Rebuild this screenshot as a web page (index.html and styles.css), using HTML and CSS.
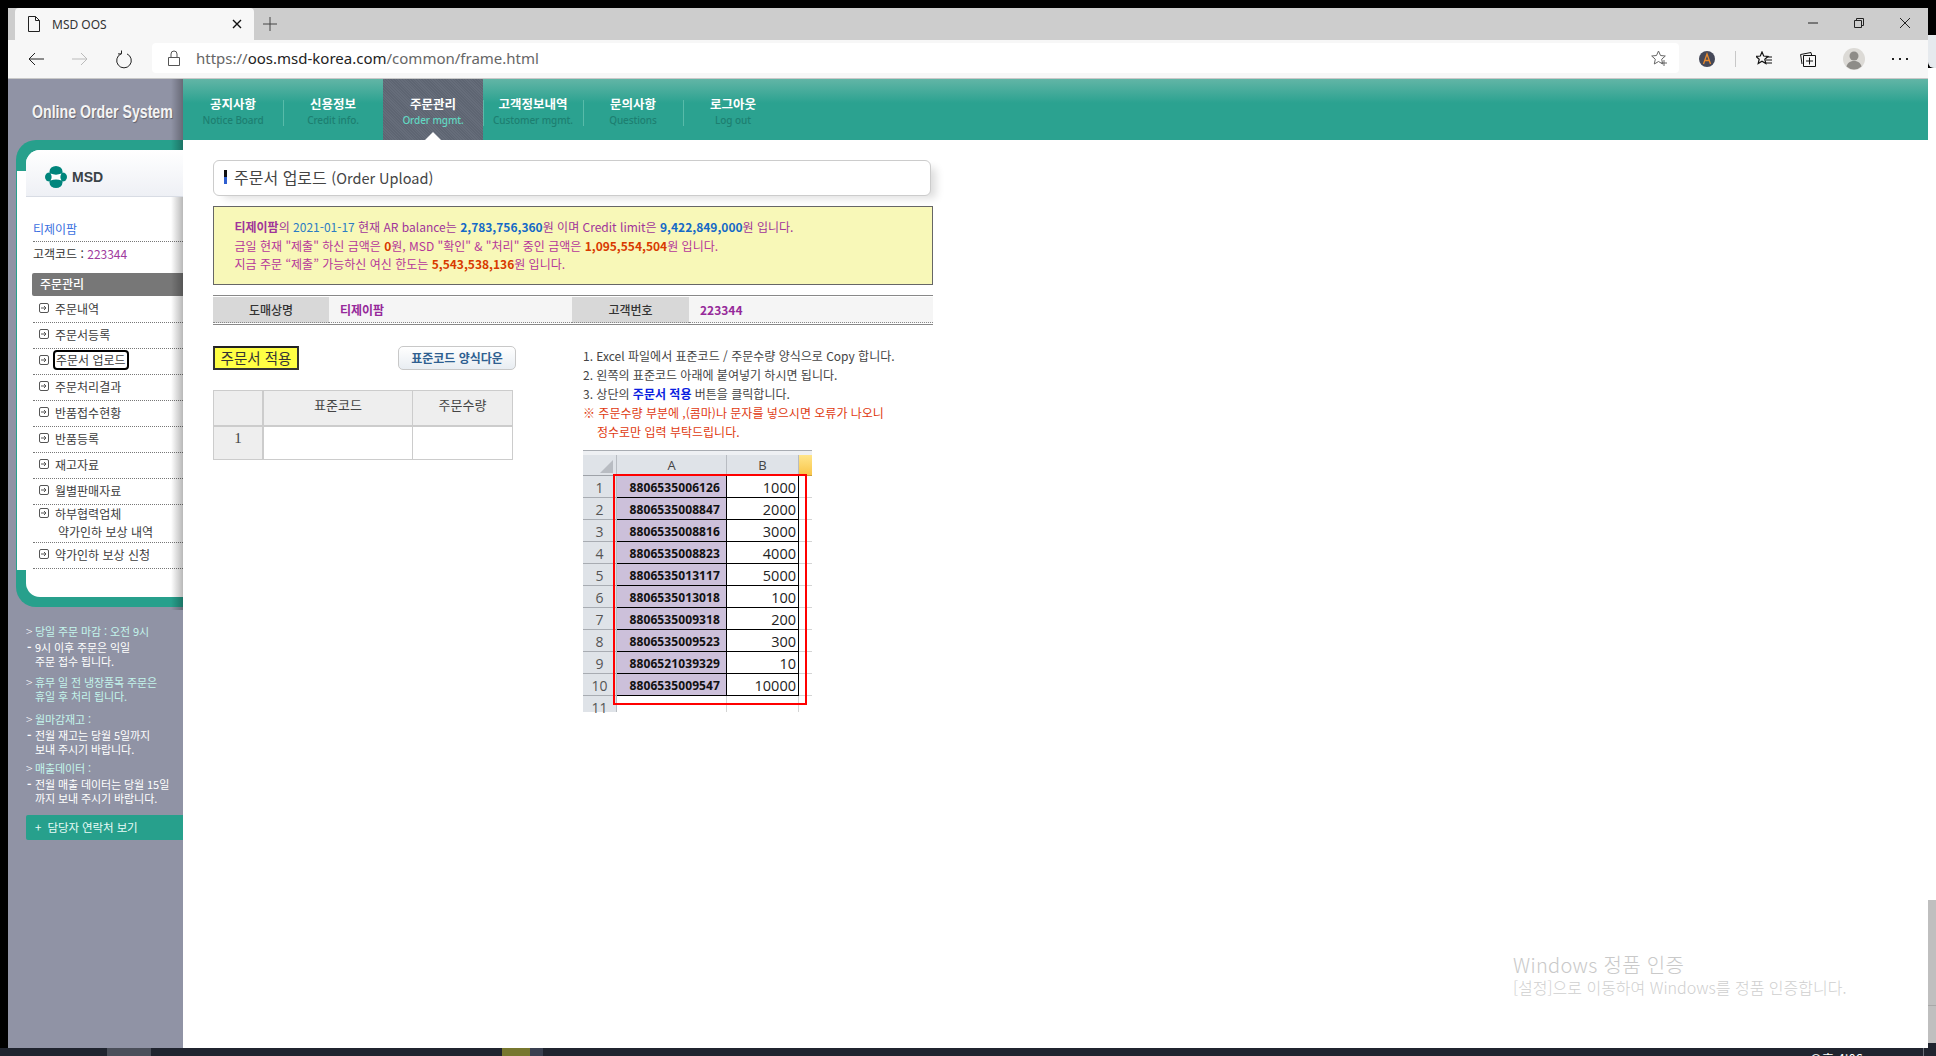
FILE: index.html
```html
<!DOCTYPE html>
<html lang="ko">
<head>
<meta charset="utf-8">
<title>MSD OOS</title>
<link rel="stylesheet" href="styles.css">
</head>
<body>
<div class="screen">
  <div class="desktop">
    <div class="browser">
      <div class="tabstrip">
        <div class="tab">
          <svg class="tab-fav" viewBox="0 0 14 16" width="14" height="16"><path d="M1.5.5h7l4 4v11h-11zM8.5.5v4h4" fill="none" stroke="#222" stroke-width="1"/></svg>
          <span class="tab-title">MSD OOS</span>
          <svg class="tab-close" viewBox="0 0 10 10" width="10" height="10"><path d="M1 1l8 8M9 1l-8 8" stroke="#111" stroke-width="1.4"/></svg>
        </div>
        <svg class="tab-new" viewBox="0 0 14 14" width="14" height="14"><path d="M7 0v14M0 7h14" stroke="#444" stroke-width="1"/></svg>
        <div class="winctl">
          <div class="winbtn"><svg viewBox="0 0 10 10" width="10" height="10"><path d="M0 5h10" stroke="#222" stroke-width="1"/></svg></div>
          <div class="winbtn"><svg viewBox="0 0 10 10" width="10" height="10"><path d="M.5 2.5h7v7h-7zM2.5 2.5v-2h7v7h-2" fill="none" stroke="#222" stroke-width="1"/></svg></div>
          <div class="winbtn"><svg viewBox="0 0 10 10" width="10" height="10"><path d="M0 0l10 10M10 0L0 10" stroke="#222" stroke-width="1"/></svg></div>
        </div>
      </div>
      <div class="toolbar">
        <div class="tbtn"><svg viewBox="0 0 16 14" width="16" height="14"><path d="M16 7H1M7 1L1 7l6 6" fill="none" stroke="#222" stroke-width="1"/></svg></div>
        <div class="tbtn"><svg viewBox="0 0 16 14" width="16" height="14"><path d="M0 7h15M9 1l6 6-6 6" fill="none" stroke="#bbb" stroke-width="1"/></svg></div>
        <div class="tbtn"><svg viewBox="0 0 16 19" width="16" height="19"><path d="M5 3.9A7.300 7.300 0 1 0 11 3.900M5.500 .5v3.400H2" fill="none" stroke="#222" stroke-width="1"/></svg></div>
        <div class="address">
          <svg class="lock" viewBox="0 0 12 16" width="12" height="16"><path d="M.5 7.5h11v8H.5zM3 7.5V4a3 3 0 0 1 6 0v3.500" fill="none" stroke="#555" stroke-width="1"/></svg>
          <span class="url"><span class="url-dim">https://</span>oos.msd-korea.com<span class="url-dim">/common/frame.html</span></span>
          <svg class="addfav" viewBox="0 0 16 16" width="16" height="16"><path d="M7.500 1l2 4.500 4.800.5-3.600 3.200 1 4.800-4.200-2.500-4.200 2.500 1-4.800L.7 6l4.800-.5z" fill="none" stroke="#666" stroke-width="1"/><path d="M13 10v6M10 13h6" stroke="#666" stroke-width="1"/></svg>
        </div>
        <div class="tbtn tbtn-first"><svg viewBox="0 0 16 16" width="16" height="16"><circle cx="8" cy="8" r="8" fill="#454858"/><path d="M4.500 13L8 3l3.500 10M6 9.500h4" fill="none" stroke="#e8892c" stroke-width="1.300"/></svg></div>
        <div class="tsep"></div>
        <div class="tbtn"><svg viewBox="0 0 16 16" width="16" height="16"><path d="M6 1l1.700 4 4.300.4-3.200 2.800 1 4.300L6 10.300 2.200 12.500l1-4.300L0 5.400 4.300 5z" fill="none" stroke="#111" stroke-width="1.200"/><path d="M10 6h6M10 9h6M10 12h6" stroke="#111" stroke-width="1"/></svg></div>
        <div class="tbtn"><svg viewBox="0 0 16 16" width="16" height="16"><path d="M2 13L.6 3.500 11 1.500l.6 2.500" fill="none" stroke="#111" stroke-width="1"/><path d="M3.500 4.500h12v11h-12zM9.500 6.500v7M6 10h7" fill="#f7f7f7" stroke="#111" stroke-width="1"/></svg></div>
        <div class="tbtn tbtn-gap"><svg viewBox="0 0 22 22" width="22" height="22"><circle cx="11" cy="11" r="11" fill="#dcdad6"/><circle cx="11" cy="8" r="4.500" fill="#8e8c88"/><path d="M3.500 18.500c1-4 4-5.500 7.500-5.500s6.500 1.500 7.500 5.500A11 11 0 0 1 3.500 18.500z" fill="#8e8c88"/></svg></div>
        <div class="tbtn tbtn-gap"><svg viewBox="0 0 16 4" width="16" height="4"><path d="M0 1h2v2H0zM7 1h2v2H7zM14 1h2v2h-2z" fill="#222"/></svg></div>
      </div>
      <div class="app">
        <aside class="sidebar">
          <div class="brand"><span class="brand-text">Online Order System</span></div>
          <div class="card">
            <div class="card-inner">
              <div class="logo">
                <svg viewBox="0 0 22 22" width="22" height="22"><ellipse cx="11" cy="5.500" rx="6.500" ry="5.500" fill="#00857c"/><ellipse cx="11" cy="16.500" rx="6.500" ry="5.500" fill="#00857c"/><circle cx="4.500" cy="11" r="4.500" fill="#00857c"/><circle cx="17.500" cy="11" r="4.500" fill="#00857c"/><path d="M5.500 7.500c3.500 1.500 7.500 1.500 11 0-1.500 2.500-1.500 4.500 0 7-3.500-1.500-7.500-1.500-11 0 1.500-2.500 1.500-4.500 0-7z" fill="#fff"/></svg>
                <span class="logo-text">MSD</span>
              </div>
              <div class="customer">
                <div class="cust-name">티제이팜</div>
                <div class="cust-code">고객코드 : <span class="purple">223344</span></div>
              </div>
              <div class="menu-title">주문관리</div>
              <ul class="menu">
                <li class="menu-item"><svg class="mi" viewBox="0 0 10 10" width="10" height="10"><rect x=".5" y=".5" width="9" height="9" rx="1.500" fill="none" stroke="#555"/><path d="M2 5h5M5 3l2 2-2 2" fill="none" stroke="#555"/></svg>주문내역</li>
                <li class="menu-item"><svg class="mi" viewBox="0 0 10 10" width="10" height="10"><rect x=".5" y=".5" width="9" height="9" rx="1.500" fill="none" stroke="#555"/><path d="M2 5h5M5 3l2 2-2 2" fill="none" stroke="#555"/></svg>주문서등록</li>
                <li class="menu-item"><svg class="mi" viewBox="0 0 10 10" width="10" height="10"><rect x=".5" y=".5" width="9" height="9" rx="1.500" fill="none" stroke="#555"/><path d="M2 5h5M5 3l2 2-2 2" fill="none" stroke="#555"/></svg><span class="focused">주문서 업로드</span></li>
                <li class="menu-item"><svg class="mi" viewBox="0 0 10 10" width="10" height="10"><rect x=".5" y=".5" width="9" height="9" rx="1.500" fill="none" stroke="#555"/><path d="M2 5h5M5 3l2 2-2 2" fill="none" stroke="#555"/></svg>주문처리결과</li>
                <li class="menu-item"><svg class="mi" viewBox="0 0 10 10" width="10" height="10"><rect x=".5" y=".5" width="9" height="9" rx="1.500" fill="none" stroke="#555"/><path d="M2 5h5M5 3l2 2-2 2" fill="none" stroke="#555"/></svg>반품접수현황</li>
                <li class="menu-item"><svg class="mi" viewBox="0 0 10 10" width="10" height="10"><rect x=".5" y=".5" width="9" height="9" rx="1.500" fill="none" stroke="#555"/><path d="M2 5h5M5 3l2 2-2 2" fill="none" stroke="#555"/></svg>반품등록</li>
                <li class="menu-item"><svg class="mi" viewBox="0 0 10 10" width="10" height="10"><rect x=".5" y=".5" width="9" height="9" rx="1.500" fill="none" stroke="#555"/><path d="M2 5h5M5 3l2 2-2 2" fill="none" stroke="#555"/></svg>재고자료</li>
                <li class="menu-item"><svg class="mi" viewBox="0 0 10 10" width="10" height="10"><rect x=".5" y=".5" width="9" height="9" rx="1.500" fill="none" stroke="#555"/><path d="M2 5h5M5 3l2 2-2 2" fill="none" stroke="#555"/></svg>월별판매자료</li>
                <li class="menu-item menu-item-double">
                  <div class="menu-line"><svg class="mi" viewBox="0 0 10 10" width="10" height="10"><rect x=".5" y=".5" width="9" height="9" rx="1.500" fill="none" stroke="#555"/><path d="M2 5h5M5 3l2 2-2 2" fill="none" stroke="#555"/></svg>하부협력업체</div>
                  <div class="menu-sub">약가인하 보상 내역</div>
                </li>
                <li class="menu-item"><svg class="mi" viewBox="0 0 10 10" width="10" height="10"><rect x=".5" y=".5" width="9" height="9" rx="1.500" fill="none" stroke="#555"/><path d="M2 5h5M5 3l2 2-2 2" fill="none" stroke="#555"/></svg>약가인하 보상 신청</li>
              </ul>
            </div>
          </div>
          <div class="notes">
            <div class="note-group">
              <div class="note-head"><span class="note-mark">&gt;</span>당일 주문 마감 : 오전 9시</div>
              <div class="note-body"><span class="note-mark note-dash">-</span>9시 이후 주문은 익일<br>주문 접수 됩니다.</div>
            </div>
            <div class="note-group note-group-wide">
              <div class="note-head"><span class="note-mark">&gt;</span>휴무 일 전 냉장품목 주문은<br>휴일 후 처리 됩니다.</div>
            </div>
            <div class="note-group note-group-tight">
              <div class="note-head"><span class="note-mark">&gt;</span>월마감재고 :</div>
              <div class="note-body"><span class="note-mark note-dash">-</span>전월 재고는 당월 5일까지<br>보내 주시기 바랍니다.</div>
            </div>
            <div class="note-group note-group-last">
              <div class="note-head"><span class="note-mark">&gt;</span>매출데이터 :</div>
              <div class="note-body"><span class="note-mark note-dash">-</span>전월 매출 데이터는 당월 15일<br>까지 보내 주시기 바랍니다.</div>
            </div>
            <div class="contact">+&nbsp;&nbsp;담당자 연락처 보기</div>
          </div>
        </aside>
        <div class="main">
          <nav class="nav">
            <div class="nav-item"><b>공지사항</b><small>Notice Board</small></div>
            <i class="nav-sep"></i>
            <div class="nav-item"><b>신용정보</b><small>Credit info.</small></div>
            <div class="nav-item nav-active"><b>주문관리</b><small>Order mgmt.</small></div>
            <i class="nav-sep"></i>
            <div class="nav-item"><b>고객정보내역</b><small>Customer mgmt.</small></div>
            <i class="nav-sep"></i>
            <div class="nav-item"><b>문의사항</b><small>Questions</small></div>
            <i class="nav-sep"></i>
            <div class="nav-item"><b>로그아웃</b><small>Log out</small></div>
          </nav>
          <div class="content">
            <div class="page-title"><i class="tick"></i>주문서 업로드&nbsp;<span class="title-en">(Order Upload)</span></div>
            <div class="notice">
              <div class="l-purple"><b>티제이팜</b>의 <span class="blue-t">2021-01-17</span> 현재 AR balance는 <b class="blue-n">2,783,756,360</b>원 이며 Credit limit은 <b class="blue-n">9,422,849,000</b>원 입니다.</div>
              <div class="l-magenta">금일 현재 "제출" 하신 금액은 <b class="red-n">0</b>원, MSD "확인" &amp; "처리" 중인 금액은 <b class="red-n">1,095,554,504</b>원 입니다.</div>
              <div class="l-magenta">지금 주문 “제출” 가능하신 여신 한도는 <b class="red-n">5,543,538,136</b>원 입니다.</div>
            </div>
            <div class="info">
              <div class="info-label">도매상명</div>
              <div class="info-value">티제이팜</div>
              <div class="info-label">고객번호</div>
              <div class="info-value">223344</div>
            </div>
            <div class="lower">
              <div class="lower-left">
                <div class="actions">
                  <div class="btn-apply">주문서 적용</div>
                  <div class="btn-dl">표준코드 양식다운</div>
                </div>
                <div class="sheet">
                  <div class="sh-head"></div>
                  <div class="sh-head">표준코드</div>
                  <div class="sh-head">주문수량</div>
                  <div class="sh-num">1</div>
                  <div class="sh-cell"></div>
                  <div class="sh-cell"></div>
                </div>
              </div>
              <div class="lower-right">
                <div class="steps">
                  <div>1. Excel 파일에서 표준코드 / 주문수량 양식으로 Copy 합니다.</div>
                  <div>2. 왼쪽의 표준코드 아래에 붙여넣기 하시면 됩니다.</div>
                  <div>3. 상단의 <b class="step-blue">주문서 적용</b> 버튼을 클릭합니다.</div>
                  <div class="step-red">※ 주문수량 부분에 ,(콤마)나 문자를 넣으시면 오류가 나오니</div>
                  <div class="step-red step-indent">정수로만 입력 부탁드립니다.</div>
                </div>
                <div class="excel">
                  <div class="xl-strip"></div>
                  <div class="xl-grid">
                    <div class="xl-corner"></div><div class="xl-col">A</div><div class="xl-col">B</div><div class="xl-col-c"></div>
                    <div class="xl-row">1</div><div class="xl-a">8806535006126</div><div class="xl-b">1000</div><div class="xl-c"></div>
                    <div class="xl-row">2</div><div class="xl-a">8806535008847</div><div class="xl-b">2000</div><div class="xl-c"></div>
                    <div class="xl-row">3</div><div class="xl-a">8806535008816</div><div class="xl-b">3000</div><div class="xl-c"></div>
                    <div class="xl-row">4</div><div class="xl-a">8806535008823</div><div class="xl-b">4000</div><div class="xl-c"></div>
                    <div class="xl-row">5</div><div class="xl-a">8806535013117</div><div class="xl-b">5000</div><div class="xl-c"></div>
                    <div class="xl-row">6</div><div class="xl-a">8806535013018</div><div class="xl-b">100</div><div class="xl-c"></div>
                    <div class="xl-row">7</div><div class="xl-a">8806535009318</div><div class="xl-b">200</div><div class="xl-c"></div>
                    <div class="xl-row">8</div><div class="xl-a">8806535009523</div><div class="xl-b">300</div><div class="xl-c"></div>
                    <div class="xl-row">9</div><div class="xl-a">8806521039329</div><div class="xl-b">10</div><div class="xl-c"></div>
                    <div class="xl-row">10</div><div class="xl-a">8806535009547</div><div class="xl-b">10000</div><div class="xl-c"></div>
                    <div class="xl-row xl-row-last">11</div><div class="xl-e"></div><div class="xl-e"></div><div class="xl-c xl-c-last"></div>
                  </div>
                  <div class="xl-mark"></div>
                </div>
              </div>
            </div>
            <div class="watermark">
              <div class="wm-title">Windows 정품 인증</div>
              <div class="wm-sub">[설정]으로 이동하여 Windows를 정품 인증합니다.</div>
            </div>
          </div>
        </div>
      </div>
    </div>
    <div class="edge">
      <div class="edge-top"></div>
      <div class="edge-light"></div>
      <div class="edge-white"></div>
      <div class="edge-grey"></div>
    </div>
  </div>
  <div class="taskbar">
    <i class="task-a"></i><i class="task-b"></i><i class="task-c"></i>
    <span class="clock">오후 4:06</span>
    <i class="task-d"></i>
  </div>
</div>
</body>
</html>
```

FILE: styles.css
```css
* { box-sizing: border-box; }
html, body { margin: 0; padding: 0; background: #000; }
body { font-family: "Noto Sans CJK KR", "Noto Sans", sans-serif; font-size: 12px; color: #333; overflow: hidden; }
ul { list-style: none; margin: 0; padding: 0; }
i { font-style: normal; display: block; }
svg { display: block; flex: none; }

.screen { width: 1936px; height: 1056px; display: flex; flex-direction: column; padding-top: 8px; overflow: hidden; }
.desktop { flex: 1; display: flex; padding-left: 8px; min-height: 0; }
.browser { width: 1920px; display: flex; flex-direction: column; }

.edge { flex: 1; display: flex; flex-direction: column; margin-top: -8px; }
.edge-top { height: 35px; background: #000; }
.edge-light { height: 33px; background: #e6eaee; border-bottom-left-radius: 6px; }
.edge-white { height: 832px; background: #fff; }
.edge-grey { flex: 1; background: linear-gradient(180deg, #bfbfbf 105px, #a8a8a8 105px, #a8a8a8 106px, #bfbfbf 106px, #bfbfbf 143px, #20242f 143px); }

.tabstrip { height: 32px; background: #cdcdcd; display: flex; align-items: flex-end; padding-left: 7px; }
.tab { width: 239px; height: 32px; background: #f7f7f7; border-radius: 4px 4px 0 0; display: flex; align-items: center; padding: 0 12px 0 12px; }
.tab-fav { margin-right: 11px; }
.tab-title { flex: 1; font-family: "Noto Sans", sans-serif; font-size: 12px; color: #333; }
.tab-new { margin: 0 0 9px 9px; }
.winctl { margin-left: auto; display: flex; height: 32px; }
.winbtn { width: 46px; height: 30px; display: flex; align-items: center; justify-content: center; }

.toolbar { height: 39px; background: #f7f7f7; border-bottom: 1px solid #c8c8c8; display: flex; align-items: center; padding: 0 6px; }
.tbtn { width: 44px; height: 30px; display: flex; align-items: center; justify-content: center; }
.tbtn-first { margin-left: 6px; }
.tbtn-gap { margin-left: 2px; }
.tsep { width: 1px; height: 16px; margin: 0 6px; background: #c8c8c8; }
.address { width: 1527px; height: 30px; margin-left: 6px; margin-top: -2px; background: #fff; border-radius: 4px; display: flex; align-items: center; padding: 0 12px 0 16px; }
.lock { margin-right: 16px; }
.url { flex: 1; font-family: "Noto Sans", sans-serif; font-size: 15px; color: #222; }
.url-dim { color: #666; }

.app { flex: 1; display: flex; min-height: 0; background: #fff; }

.sidebar { width: 175px; background: #9093a5; position: relative; color: #fff; flex: none; }
.sidebar::after { content: ""; position: absolute; top: 0; right: 0; width: 12px; height: 531px; background: linear-gradient(90deg, rgba(0,0,0,0), rgba(0,0,0,.28)); pointer-events: none; }
.brand { height: 61px; padding: 21px 0 0 24px; white-space: nowrap; overflow: hidden; }
.brand-text { display: block; width: 190px; transform: scaleX(.745); transform-origin: left center; font-family: "Liberation Sans", sans-serif; font-weight: 700; font-size: 19px; line-height: 24px; color: #f4f4f4; text-shadow: 1px 1px 1px rgba(0,0,0,.35); }

.card { margin-left: 8px; height: 467px; background: #27a08c; border-radius: 20px 0 0 20px; padding: 10px 0 10px 10px; position: relative; }
.card::before { content: ""; position: absolute; left: 1px; top: 31px; bottom: 37px; width: 10px; background: #fff; }
.card-inner { height: 100%; background: #fff; border-radius: 14px 0 0 14px; padding-left: 7px; position: relative; }
.logo { height: 47px; margin-left: -7px; padding: 7px 0 0 19px; border-bottom: 1px solid #d8dce4; border-radius: 14px 0 0 0; background: linear-gradient(180deg, #fff, #eef0f5); display: flex; align-items: center; gap: 5px; position: relative; z-index: 1; }
.logo-text { font-family: "Liberation Sans", sans-serif; font-weight: 700; font-size: 14px; color: #3a4246; }
.customer { padding-top: 22px; color: #333; }
.cust-name { height: 23px; line-height: 20px; color: #3a6fe0; border-bottom: 1px dotted #777; }
.cust-code { height: 24px; line-height: 24px; }
.purple { color: #a03a9e; }
.menu-title { margin: 7px 0 0 -1px; height: 23px; line-height: 21px; padding-left: 8px; background: #777; color: #fff; font-weight: 500; border-radius: 2px 0 0 2px; }
.menu { padding-top: 1px; }
.menu-item { height: 26px; display: flex; align-items: center; gap: 6px; padding: 0 0 3px 6px; border-bottom: 1px dotted #777; color: #3c3c3c; }
.menu-item-double { height: 39px; display: block; padding-top: 0; }
.menu-line { display: flex; align-items: center; gap: 6px; height: 18px; margin-top: -1px; }
.menu-sub { padding-left: 19px; height: 19px; line-height: 19px; }
.focused { border: 2px solid #000; border-radius: 4px; padding: 0 1px; line-height: 16px; margin-left: -2px; }

.notes { padding: 17px 0 0 18px; font-size: 11px; letter-spacing: -.1px; line-height: 14px; white-space: nowrap; }
.note-group { margin-bottom: 7px; }
.note-group-wide { margin-bottom: 9px; }
.note-group-tight { margin-bottom: 5px; }
.note-group-last { margin-bottom: 10px; }
.note-head { color: #c4f5ec; padding-left: 9px; position: relative; }
.note-body { color: #fff; padding-left: 9px; position: relative; margin-top: 2px; }
.note-mark { position: absolute; left: 0; top: 0; color: #fff; font-size: 12px; font-weight: 300; }
.note-dash { left: 1px; font-weight: 700; }
.contact { height: 25px; line-height: 25px; padding-left: 9px; background: #27a08c; color: #e8fbf7; border-radius: 2px 0 0 2px; font-size: 11.500px; }

.main { flex: 1; display: flex; flex-direction: column; min-width: 0; }
.nav { height: 61px; flex: none; display: flex; align-items: center; background: linear-gradient(180deg, #62b5a6 0, #2ba290 24px, #2ba290 100%); }
.nav-item { width: 100px; height: 61px; display: flex; flex-direction: column; align-items: center; padding-top: 15px; position: relative; }
.nav-item b { font-size: 12.500px; font-weight: 700; line-height: 20px; color: #fff; }
.nav-item small { font-family: "Noto Sans", sans-serif; font-size: 10px; font-weight: 500; line-height: 12px; letter-spacing: -.1px; color: #1d7f70; white-space: nowrap; }
.nav-sep { width: 1px; height: 26px; margin-top: 6px; background: #58bba9; flex: none; margin-right: -1px; position: relative; }
.nav-active { background: repeating-linear-gradient(45deg, #5e6572 0 1px, #666d7a 1px 2px); }
.nav-active small { color: #62d8c2; }
.nav-active::after { content: ""; position: absolute; left: 50%; bottom: 0; margin-left: -8px; border: 8px solid transparent; border-top: 0; border-bottom-color: #fff; }

.content { flex: 1; position: relative; padding: 20px 0 0 30px; background: #fff; }
.page-title { width: 718px; height: 36px; display: flex; align-items: center; border: 1px solid #ccc; border-radius: 6px; font-size: 16px; color: #444; padding: 0 0 2px 10px; box-shadow: 8px 5px 8px -3px rgba(0,0,0,.14); background: #fff; white-space: pre; }
.title-en { font-size: 14.500px; }
.tick { width: 3px; height: 14px; margin-right: 7px; background: linear-gradient(180deg, #111 50%, #2f5fd0 50%); }

.notice { width: 720px; height: 79px; margin-top: 10px; padding: 11px 0 0 20.500px; background: #f8f8b8; border: 1px solid #666; line-height: 18.500px; white-space: nowrap; }
.l-purple { color: #a0359a; }
.l-magenta { color: #b5369a; }
.blue-t { color: #2b7cc4; }
.blue-n { color: #1569c7; }
.red-n { color: #d83a00; }

.info { width: 720px; height: 30px; margin-top: 10px; padding: 1px 0; border-top: 1px solid #888; border-bottom: 1px solid #888; display: grid; grid-template-columns: 116px 243px 117px 244px; grid-template-rows: 26px; font-size: 12px; line-height: 25px; }
.info-label { background: #d8d8d8; text-align: center; color: #333; font-weight: 500; border-bottom: 1px dotted #888; }
.info-value { background: #f5f5f5; padding-left: 11px; color: #96299a; font-weight: 700; border-bottom: 1px dotted #888; }
.lower { display: flex; margin-top: 21px; }
.lower-left { width: 370px; flex: none; }
.actions { width: 303px; height: 24px; display: flex; justify-content: space-between; }
.btn-apply { width: 86px; height: 24px; background: #ffff44; border: 2px solid #333; border-top-color: #222; font-size: 14.500px; line-height: 19px; text-align: center; color: #333; white-space: nowrap; }
.btn-dl { width: 118px; height: 24px; border: 1px solid #c8c8c8; border-radius: 5px; background: linear-gradient(180deg, #fff, #e8edf2); text-align: center; color: #2f5f90; font-weight: 700; font-size: 12px; line-height: 22px; }
.sheet { width: 300px; height: 70px; margin-top: 20px; display: grid; grid-template-columns: 50px 149px 99px; grid-template-rows: 36px 32px; border: 1px solid #ccc; }
.sh-head { background: #eee; text-align: center; padding-top: 5px; font-size: 13px; line-height: 18px; color: #444; border-bottom: 2px solid #ccc; border-right: 1px solid #ccc; }
.sh-head:first-child { border-right-width: 2px; }
.sh-head:nth-child(3) { border-right: 0; }
.sh-num { background: #eee; text-align: center; font-family: "Liberation Serif", serif; font-size: 15px; line-height: 22px; color: #444; border-right: 2px solid #ccc; }
.sh-cell { background: #fff; border-right: 1px solid #ccc; }
.sh-cell:last-child { border-right: 0; }

.lower-right { width: 350px; flex: none; }
.steps { line-height: 19px; color: #444; white-space: nowrap; }
.step-blue { color: #0a1ee0; }
.step-red { color: #e03a10; }
.step-indent { padding-left: 14px; }

.excel { width: 229px; margin-top: 8px; position: relative; }
.xl-strip { height: 6px; background: linear-gradient(180deg, #fff 1px, #a8acb2 1px, #a8acb2 2px, #eef0f3 2px); }
.xl-grid { display: grid; grid-template-columns: 34px 110px 72px 13px; grid-template-rows: 21px repeat(10, 22px) 16px; }
.xl-corner { background: #dfe3e8; border-right: 1px solid #b8bcc2; border-bottom: 1px solid #9ea2a8; position: relative; }
.xl-corner::after { content: ""; position: absolute; right: 3px; bottom: 2px; border-style: solid; border-width: 0 0 13px 13px; border-color: transparent transparent #b8bcc2 transparent; }
.xl-col { background: #dfe3e8; border-right: 1px solid #b8bcc2; border-bottom: 1px solid #9ea2a8; text-align: center; font-family: "Open Sans", sans-serif; font-size: 13px; line-height: 20px; color: #444; }
.xl-col-c { background: linear-gradient(180deg, #ffe58a, #f9c64a); border-bottom: 1px solid #c8a040; }
.xl-row { background: #dfe3e8; border-right: 1px solid #b8bcc2; border-bottom: 1px solid #a8acb2; text-align: center; font-family: "Open Sans", sans-serif; font-size: 14px; line-height: 23px; color: #555; }
.xl-row-last { border-bottom: 0; }
.xl-a { background: #ccc0da; border-right: 1px solid #000; border-bottom: 1px solid #000; text-align: right; padding-right: 6px; font-family: "Open Sans", sans-serif; font-weight: 700; font-size: 12px; letter-spacing: .1px; line-height: 23px; color: #111; overflow: hidden; }
.xl-b { background: #fff; border-right: 1px solid #000; border-bottom: 1px solid #000; text-align: right; padding-right: 2px; font-family: "Open Sans", sans-serif; font-size: 14.500px; line-height: 23px; color: #222; overflow: hidden; }
.xl-c { border-bottom: 1px solid #d4d4d4; }
.xl-c-last { border-bottom: 0; }
.xl-e { border-right: 1px solid #d4d4d4; }
.xl-mark { position: absolute; left: 30px; top: 25px; width: 194px; height: 231px; border: 2px solid #f00; }

.watermark { position: absolute; left: 1330px; top: 811px; color: #c9c9c9; white-space: nowrap; }
.wm-title { font-size: 20px; font-weight: 300; line-height: 27px; letter-spacing: .3px; }
.wm-sub { font-size: 16px; font-weight: 300; line-height: 19px; color: #cfcfcf; }

.taskbar { height: 8px; background: #20242f; position: relative; flex: none; overflow: hidden; }
.task-a { position: absolute; left: 107px; top: 0; width: 44px; height: 8px; background: #4b4f5a; }
.task-b { position: absolute; left: 502px; top: 0; width: 28px; height: 8px; background: #77772f; }
.task-c { position: absolute; left: 530px; top: 0; width: 13px; height: 8px; background: #3a4050; }
.task-d { position: absolute; left: 1923px; top: 0; width: 1px; height: 8px; background: #6a6e78; }
.clock { position: absolute; left: 1810px; top: 2px; font-size: 13px; line-height: 18px; color: #fff; }
```
